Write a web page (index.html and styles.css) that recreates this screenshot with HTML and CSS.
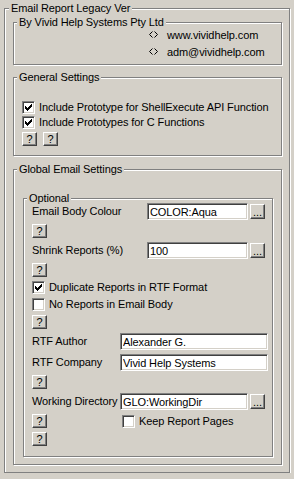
FILE: index.html
```html
<!DOCTYPE html>
<html lang="en">
<head>
    <meta charset="UTF-8">
    <meta name="viewport" content="width=device-width, initial-scale=1.0">
    <title>Email Report Legacy Ver</title>
    <link rel="stylesheet" href="styles.css">
</head>
<body>
    <fieldset class="group outer">
        <legend>Email Report Legacy Ver</legend>
        <div class="group-body">

            <fieldset class="group about">
                <legend>By Vivid Help Systems Pty Ltd</legend>
                <div class="group-body">
                    <div class="link">
                        <svg class="arrows" width="9" height="7" viewBox="0 0 9 7"><path d="M3.5 0.5 L0.5 3.5 L3.5 6.5 M5.5 0.5 L8.5 3.5 L5.5 6.5" fill="none" stroke="#000" stroke-width="1"/></svg>www.vividhelp.com
                    </div>
                    <div class="link">
                        <svg class="arrows" width="9" height="7" viewBox="0 0 9 7"><path d="M3.5 0.5 L0.5 3.5 L3.5 6.5 M5.5 0.5 L8.5 3.5 L5.5 6.5" fill="none" stroke="#000" stroke-width="1"/></svg>adm@vividhelp.com
                    </div>
                </div>
            </fieldset>

            <fieldset class="group general">
                <legend>General Settings</legend>
                <div class="group-body">
                    <label class="check">
                        <span class="box"><svg width="9" height="9" viewBox="0 0 9 9"><path d="M1 3h1v3h-1zM2 4h1v3h-1zM3 5h1v3h-1zM4 4h1v3h-1zM5 3h1v3h-1zM6 2h1v3h-1zM7 1h1v3h-1z"/></svg></span>
                        Include Prototype for ShellExecute API Function
                    </label>
                    <label class="check">
                        <span class="box"><svg width="9" height="9" viewBox="0 0 9 9"><path d="M1 3h1v3h-1zM2 4h1v3h-1zM3 5h1v3h-1zM4 4h1v3h-1zM5 3h1v3h-1zM6 2h1v3h-1zM7 1h1v3h-1z"/></svg></span>
                        Include Prototypes for C Functions
                    </label>
                    <div class="help-row">
                        <button class="btn help">?</button>
                        <button class="btn help">?</button>
                    </div>
                </div>
            </fieldset>

            <fieldset class="group global">
                <legend>Global Email Settings</legend>
                <div class="group-body">

                    <fieldset class="group optional">
                        <legend>Optional</legend>
                        <div class="group-body">
                            <div class="fields">
                                <div class="field">
                                    <span class="field-label wide">Email Body Colour</span>
                                    <input class="text short" type="text" value="COLOR:Aqua">
                                    <button class="btn browse">...</button>
                                </div>
                                <div><button class="btn help">?</button></div>

                                <div class="field">
                                    <span class="field-label wide">Shrink Reports (%)</span>
                                    <input class="text short" type="text" value="100">
                                    <button class="btn browse">...</button>
                                </div>
                                <div><button class="btn help">?</button></div>

                                <label class="check">
                                    <span class="box"><svg width="9" height="9" viewBox="0 0 9 9"><path d="M1 3h1v3h-1zM2 4h1v3h-1zM3 5h1v3h-1zM4 4h1v3h-1zM5 3h1v3h-1zM6 2h1v3h-1zM7 1h1v3h-1z"/></svg></span>
                                    Duplicate Reports in RTF Format
                                </label>
                                <label class="check">
                                    <span class="box"></span>
                                    No Reports in Email Body
                                </label>
                                <div><button class="btn help">?</button></div>

                                <div class="field">
                                    <span class="field-label">RTF Author</span>
                                    <input class="text long" type="text" value="Alexander G.">
                                </div>
                                <div class="field">
                                    <span class="field-label">RTF Company</span>
                                    <input class="text long" type="text" value="Vivid Help Systems">
                                </div>
                                <div><button class="btn help">?</button></div>

                                <div class="field">
                                    <span class="field-label">Working Directory</span>
                                    <input class="text mid" type="text" value="GLO:WorkingDir">
                                    <button class="btn browse">...</button>
                                </div>
                                <div class="keep-row">
                                    <div class="slot"><button class="btn help">?</button></div>
                                    <label class="check">
                                        <span class="box"></span>
                                        Keep Report Pages
                                    </label>
                                </div>
                                <div><button class="btn help">?</button></div>
                            </div>
                        </div>
                    </fieldset>

                </div>
            </fieldset>

        </div>
    </fieldset>
</body>
</html>
```

FILE: styles.css
```css
:root {
    --face: #d4d0c8;
    --shadow: #808080;
    --dark: #404040;
    --light: #ffffff;
}

* {
    box-sizing: border-box;
}

body {
    margin: 0;
    background-color: var(--face);
    font-family: "Liberation Sans", Arial, sans-serif;
    font-size: 11px;
    line-height: 13px;
    letter-spacing: -0.1px;
    color: #000;
}

/* etched group boxes */
.group {
    margin: 0;
    padding: 0;
    min-width: 0;
    border: 1px solid var(--shadow);
    box-shadow: inset 1px 1px var(--light), 1px 1px var(--light);
}

.group > legend {
    margin-left: 3px;
    padding: 0 2px;
    line-height: 13px;
    background-color: var(--face);
}

.outer {
    margin: 2px 4px 0;
}

.outer > legend {
    margin-left: 4px;
}

.outer > .group-body {
    padding: 1px 7px 7px 8px;
}

.about > .group-body {
    display: flex;
    flex-direction: column;
    gap: 4px;
    padding: 0 0 5px 135px;
}

.link {
    white-space: nowrap;
}

.arrows {
    vertical-align: 1px;
    margin-right: 9px;
}

.general {
    margin-top: 6px;
}

.general > .group-body {
    display: flex;
    flex-direction: column;
    gap: 2px;
    padding: 17px 8px 9px;
}

.help-row {
    display: flex;
    gap: 6px;
    margin-top: 1px;
}

.global {
    margin-top: 7px;
}

.global > .group-body {
    padding: 16px 8px 7px 9px;
}

.optional > .group-body {
    padding: 0 0 10px 8px;
}

.fields {
    display: flex;
    flex-direction: column;
    gap: 4px;
    margin-top: -2px;
}

/* controls */
.btn {
    display: block;
    margin: 0;
    padding: 0;
    font-family: inherit;
    font-size: 11px;
    line-height: 11px;
    letter-spacing: 0;
    color: #000;
    background-color: var(--face);
    border: 1px solid;
    border-color: var(--light) var(--dark) var(--dark) var(--light);
    box-shadow: inset -1px -1px var(--shadow);
    border-radius: 0;
}

.help {
    width: 15px;
    height: 14px;
}

.browse {
    width: 15px;
    height: 15px;
    margin-left: 2px;
    line-height: 15px;
}

.check {
    display: flex;
    align-items: center;
    gap: 4px;
    height: 13px;
    white-space: nowrap;
}

.box {
    flex: none;
    width: 13px;
    height: 13px;
    padding: 1px;
    background-color: #fff;
    border: 1px solid;
    border-color: var(--shadow) var(--light) var(--light) var(--shadow);
    box-shadow: inset 1px 1px var(--dark), inset -1px -1px var(--face);
}

.box svg {
    display: block;
}

.field {
    display: flex;
    align-items: center;
    height: 17px;
}

.field-label {
    flex: none;
    width: 88px;
    white-space: nowrap;
}

.field-label.wide {
    width: 115px;
}

.text {
    height: 17px;
    margin: 0;
    padding: 0 2px;
    font-family: inherit;
    font-size: 11px;
    letter-spacing: -0.1px;
    color: #000;
    background-color: #fff;
    border: 1px solid;
    border-color: var(--shadow) var(--light) var(--light) var(--shadow);
    box-shadow: inset 1px 1px var(--dark), inset -1px -1px var(--face);
    border-radius: 0;
    outline: none;
}

.text.short {
    width: 101px;
}

.text.mid {
    width: 128px;
}

.text.long {
    width: 148px;
}

.keep-row {
    display: flex;
    align-items: flex-start;
}

.slot {
    width: 88px;
}

.keep-row .check {
    margin: 1px 0 0 2px;
}
```
